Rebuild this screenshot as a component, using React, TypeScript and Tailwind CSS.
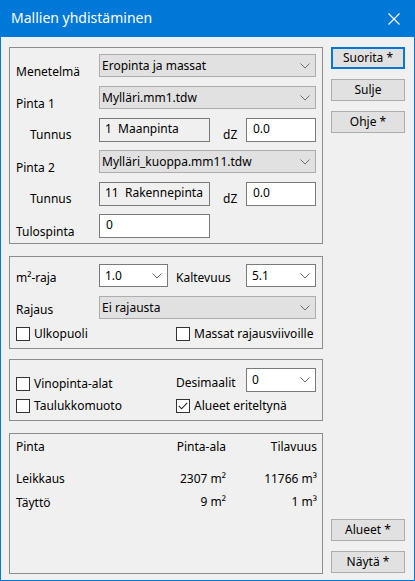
import React from "react";

const font = { fontFamily: '"Noto Sans", "Open Sans", sans-serif' };

function Chevron() {
  return (
    <svg width="10" height="6" viewBox="0 0 10 6" className="shrink-0">
      <path d="M0.5 0.5 L5 5 L9.5 0.5" fill="none" stroke="#6d6d6d" strokeWidth="1" />
    </svg>
  );
}

function Combo({ text, w, editable }: { text: string; w: string; editable?: boolean }) {
  return (
    <div
      className={`${w} h-[23px] flex items-center justify-between border ${
        editable ? "bg-white border-[#7a7a7a] pl-[5px]" : "bg-[#e1e1e1] border-[#adadad] pl-[2px]"
      } pr-[5px] shrink-0`}
    >
      <span className="leading-[16px] whitespace-pre">{text}</span>
      <Chevron />
    </div>
  );
}

function TextBox({ text, w, ro }: { text: string; w: string; ro?: boolean }) {
  return (
    <div
      className={`${w} h-[24px] flex items-center border border-[#7a7a7a] ${
        ro ? "bg-[#f0f0f0] pl-[5px]" : "bg-white pl-[6px]"
      } pb-[2px] shrink-0`}
    >
      <span className="leading-[16px] whitespace-pre">{text}</span>
    </div>
  );
}

function Check({ label, checked }: { label: string; checked?: boolean }) {
  return (
    <div className="flex items-center h-[14px]">
      <div className="w-[14px] h-[14px] border border-[#333333] bg-white flex items-center justify-center shrink-0">
        {checked && (
          <svg width="10" height="8" viewBox="0 0 10 8">
            <path d="M0.8 3.8 L3.6 6.8 L9.2 0.8" fill="none" stroke="#222" strokeWidth="1.1" />
          </svg>
        )}
      </div>
      <span className="ml-[4px] leading-[16px] whitespace-nowrap">{label}</span>
    </div>
  );
}

function Button({ text, primary, className = "" }: { text: string; primary?: boolean; className?: string }) {
  return (
    <div
      className={`w-[74px] h-[22px] flex items-center justify-center bg-[#e1e1e1] ${
        primary ? "border-2 border-[#0078d7]" : "border border-[#adadad]"
      } ${className}`}
    >
      <span className="leading-[16px] pb-[1px]">{text}</span>
    </div>
  );
}

export default function App() {
  return (
    <div
      style={font}
      className="w-[415px] h-[581px] bg-[#f0f0f0] border-x border-b border-[#0078d7] flex flex-col text-[12px] text-black overflow-hidden"
    >
      {/* Title bar */}
      <div className="h-[37px] bg-[#0078d7] flex items-center justify-between shrink-0 pl-[10px] pr-[14px]">
        <span className="text-white text-[14px] leading-[18px] pb-[1px]">Mallien yhdistäminen</span>
        <svg width="12" height="12" viewBox="0 0 12 12">
          <path d="M0.5 0.5 L11.5 11.5 M11.5 0.5 L0.5 11.5" stroke="#ffffff" strokeWidth="1.1" />
        </svg>
      </div>

      {/* Client */}
      <div className="flex pt-[10px] pl-[8px] gap-[8px]">
        {/* Left column */}
        <div className="w-[314px] flex flex-col">
          {/* Box 1 */}
          <div className="h-[197px] border border-[#8c8c8c] pt-[6px]">
            <div className="flex h-[32px] items-start">
              <span className="w-[89px] pl-[6px] mt-[10px] leading-[16px]">Menetelmä</span>
              <Combo text="Eropinta ja massat" w="w-[217px]" />
            </div>
            <div className="flex h-[32px] items-start">
              <span className="w-[89px] pl-[6px] mt-[10px] leading-[16px]">Pinta 1</span>
              <Combo text="Mylläri.mm1.tdw" w="w-[217px]" />
            </div>
            <div className="flex h-[32px] items-start">
              <span className="w-[89px] pl-[20px] mt-[9px] leading-[16px]">Tunnus</span>
              <TextBox text="1  Maanpinta" w="w-[111px]" ro />
              <span className="ml-[13px] w-[23px] mt-[9px] leading-[16px]">dZ</span>
              <TextBox text="0.0" w="w-[70px]" />
            </div>
            <div className="flex h-[32px] items-start">
              <span className="w-[89px] pl-[6px] mt-[10px] leading-[16px]">Pinta 2</span>
              <Combo text="Mylläri_kuoppa.mm11.tdw" w="w-[217px]" />
            </div>
            <div className="flex h-[32px] items-start">
              <span className="w-[89px] pl-[20px] mt-[9px] leading-[16px]">Tunnus</span>
              <TextBox text="11  Rakennepinta" w="w-[111px]" ro />
              <span className="ml-[13px] w-[23px] mt-[9px] leading-[16px]">dZ</span>
              <TextBox text="0.0" w="w-[70px]" />
            </div>
            <div className="flex h-[24px] items-start">
              <span className="w-[89px] pl-[6px] mt-[10px] leading-[16px]">Tulospinta</span>
              <TextBox text="0" w="w-[111px]" />
            </div>
          </div>

          {/* Box 2 */}
          <div className="mt-[12px] h-[93px] border border-[#8c8c8c] pt-[7px]">
            <div className="flex h-[32px] items-start">
              <span className="w-[89px] pl-[6px] mt-[6px] leading-[16px]">m²-raja</span>
              <Combo text="1.0" w="w-[69px]" editable />
              <span className="ml-[8px] w-[70px] mt-[6px] leading-[16px]">Kaltevuus</span>
              <Combo text="5.1" w="w-[70px]" editable />
            </div>
            <div className="flex h-[31px] items-start">
              <span className="w-[89px] pl-[6px] mt-[6px] leading-[16px]">Rajaus</span>
              <Combo text="Ei rajausta" w="w-[217px]" />
            </div>
            <div className="flex h-[14px] pl-[6px]">
              <div className="w-[160px]">
                <Check label="Ulkopuoli" />
              </div>
              <Check label="Massat rajausviivoille" />
            </div>
          </div>

          {/* Box 3 */}
          <div className="mt-[10px] h-[62px] border border-[#8c8c8c] pt-[8px]">
            <div className="flex h-[24px] items-start pl-[6px]">
              <div className="w-[160px] mt-[9px]">
                <Check label="Vinopinta-alat" />
              </div>
              <span className="w-[70px] mt-[7px] leading-[16px]">Desimaalit</span>
              <div className="h-[24px] flex">
                <Combo text="0" w="w-[70px] !h-[24px]" editable />
              </div>
            </div>
            <div className="flex h-[14px] pl-[6px] mt-[7px]">
              <div className="w-[160px]">
                <Check label="Taulukkomuoto" />
              </div>
              <Check label="Alueet eriteltynä" checked />
            </div>
          </div>

          {/* Box 4 */}
          <div className="mt-[12px] h-[141px] border border-[#8c8c8c] pt-[5px] pl-[6px] pr-[5px]">
            <div className="flex leading-[16px]">
              <span className="flex-1">Pinta</span>
              <span className="w-[80px] text-right">Pinta-ala</span>
              <span className="w-[91px] text-right">Tilavuus</span>
            </div>
            <div className="flex leading-[16px] mt-[16px]">
              <span className="flex-1">Leikkaus</span>
              <span className="w-[80px] text-right">2307 m²</span>
              <span className="w-[91px] text-right">11766 m³</span>
            </div>
            <div className="flex leading-[16px] mt-[7px]">
              <span className="flex-1 mt-[1px]">Täyttö</span>
              <span className="w-[80px] text-right">9 m²</span>
              <span className="w-[91px] text-right">1 m³</span>
            </div>
          </div>
        </div>

        {/* Right column buttons */}
        <div className="flex flex-col">
          <Button text="Suorita *" primary />
          <Button text="Sulje" className="mt-[10px]" />
          <Button text="Ohje *" className="mt-[10px]" />
          <Button text="Alueet *" className="mt-auto" />
          <Button text="Näytä *" className="mt-[10px] mb-[1px]" />
        </div>
      </div>
    </div>
  );
}
